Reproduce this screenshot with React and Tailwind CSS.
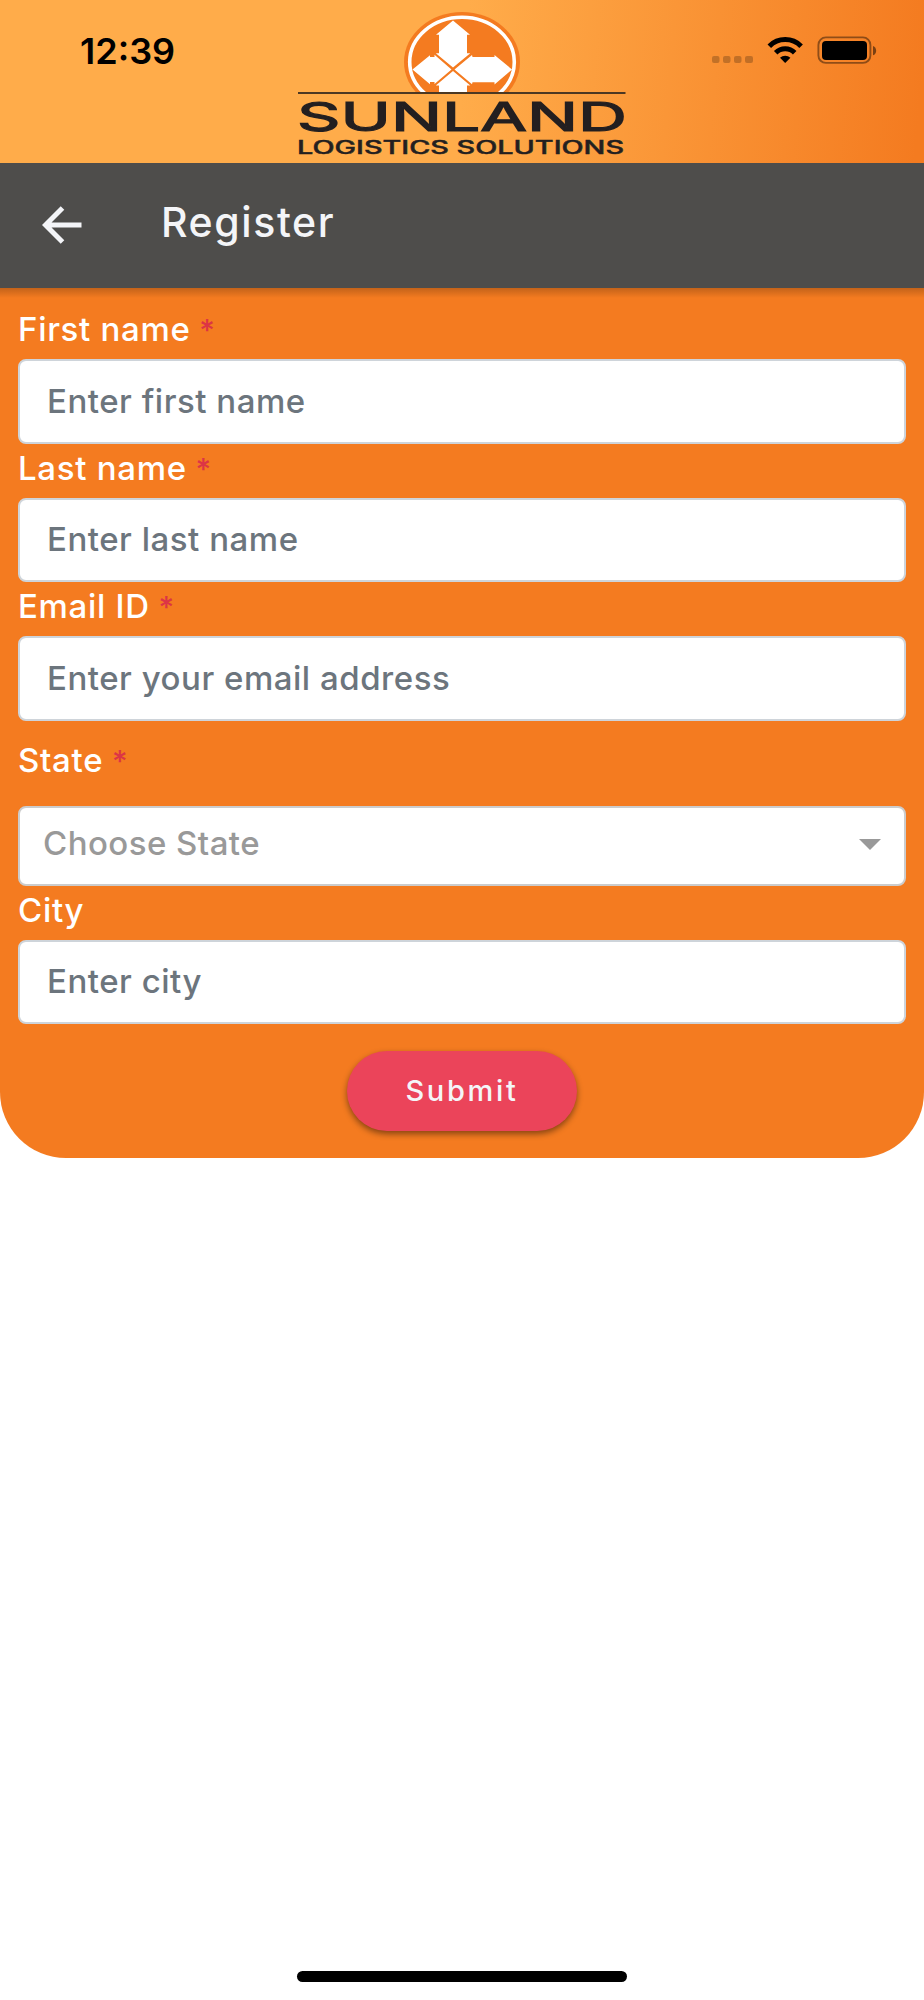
import { useState } from "react";

const fields = [
  { id: "firstName", label: "First name", placeholder: "Enter first name", required: true },
  { id: "lastName", label: "Last name", placeholder: "Enter last name", required: true },
  { id: "email", label: "Email ID", placeholder: "Enter your email address", required: true },
];

function Logo() {
  return (
    <svg width="330" height="151" viewBox="297 11 330 151" className="mx-auto mt-[11px] block">
      <clipPath id="sun">
        <rect x="297" y="11" width="330" height="81.5" />
      </clipPath>
      <g clipPath="url(#sun)">
        <ellipse cx="462" cy="62" rx="58" ry="50" fill="#f47b20" />
        <ellipse cx="462" cy="62" rx="52.3" ry="44.7" fill="none" stroke="#fff" strokeWidth="3.6" />
        <path
          fill="#fff"
          d="M453 20.5l17 14.3h-3v18.400h3.300L453 67.500 435.800 53.200h3.200V34.800h-3zM412.500 69.500L430 55.300v1.700h4.500v-2.200L451.500 69.500 434.500 84v-2H430v2.200zM454.500 69.500L472 55l.5 2h22v-2l17.500 14.500L494.500 84.500V82.200h-22L472 84.300zM453 71l17.300 14.500H467V93h-28v-7.500h-3.200z"
        />
      </g>
      <path d="M298 93h327.500" stroke="#4c3823" strokeWidth="2" />
      <text
        x="297"
        y="130.500"
        textLength="330"
        lengthAdjust="spacingAndGlyphs"
        className="font-['Inter',sans-serif] text-[40px] font-normal"
        fill="#231f20"
        stroke="#231f20"
        strokeWidth="1.2"
      >
        SUNLAND
      </text>
      <text
        x="297"
        y="153.500"
        textLength="327"
        lengthAdjust="spacingAndGlyphs"
        className="font-['Inter',sans-serif] text-[18px] font-medium"
        fill="#231f20"
        stroke="#231f20"
        strokeWidth="0.4"
      >
        LOGISTICS SOLUTIONS
      </text>
    </svg>
  );
}

function StatusIcons() {
  return (
    <svg width="166" height="30" viewBox="711 36 166 30">
      <g fill="#000" fillOpacity="0.22">
        <rect x="712" y="56" width="7.500" height="7" rx="2" />
        <rect x="723" y="56" width="7.500" height="7" rx="2" />
        <rect x="734" y="56" width="7.500" height="7" rx="2" />
        <rect x="745" y="56" width="8" height="7" rx="2" />
      </g>
      <g fill="none" stroke="#000" strokeWidth="5">
        <path d="M769.300 46.200a22.500 22.500 0 0 1 31.800 0" />
        <path d="M775.700 52.800a13.400 13.400 0 0 1 19 0" />
      </g>
      <path d="M785.200 63l-5.200-5.200a7.400 7.400 0 0 1 10.400 0z" />
      <rect x="818.400" y="37.400" width="52" height="25.500" rx="7.500" fill="none" stroke="#000" strokeOpacity="0.42" strokeWidth="1.900" />
      <rect x="822" y="41" width="45" height="19" rx="4" />
      <path d="M873 46c4.200 1.500 4.200 7.800 0 9.300z" fillOpacity="0.5" />
    </svg>
  );
}

function Required() {
  return <span className="text-[30px] leading-none text-[#dc3545]"> *</span>;
}

function Field({ field, value, onChange }) {
  return (
    <div>
      <label htmlFor={field.id} className="mb-2 block h-[46px] leading-[49px] text-white">
        {field.label}
        {field.required && <Required />}
      </label>
      <input
        id={field.id}
        value={value}
        onChange={onChange}
        placeholder={field.placeholder}
        className="block h-[84.500px] w-full rounded-[8px] border-2 border-[#ced4da] bg-white px-[27px] pb-[2px] tracking-[0.520px] outline-none placeholder:text-[#6c757d]"
      />
    </div>
  );
}

function App() {
  const [form, setForm] = useState({ firstName: "", lastName: "", email: "", city: "" });

  const handleChange = (e) => {
    setForm({ ...form, [e.target.id]: e.target.value });
  };

  return (
    <div className="flex h-[2000px] w-[924px] flex-col overflow-hidden bg-white font-['Inter',sans-serif] text-[33px] font-medium">
      <header className="relative h-[163px] shrink-0 bg-[linear-gradient(95deg,#ffac4a_0%,#ffac4a_50%,#f47b20_99%)]">
        <div className="absolute left-[80px] top-[29px] text-[36px] leading-[44px] font-semibold">
          12:39
        </div>
        <Logo />
        <div className="absolute left-[711px] top-[36px]">
          <StatusIcons />
        </div>
      </header>

      <nav className="flex h-[125px] shrink-0 items-center bg-[#4e4d4b] text-[#f4f5f8]">
        <svg width="40" height="38" viewBox="0 0 40 38" className="ml-[42px] mb-px" fill="none" stroke="currentColor" strokeWidth="5">
          <path d="M39.500 19H4.500M20.500 2L3.500 19l17 17" />
        </svg>
        <h1 className="ml-[79px] pb-[7px] text-[41px] leading-[50px] font-medium tracking-[1.600px]">Register</h1>
      </nav>

      <form
        onSubmit={(e) => e.preventDefault()}
        className="flex h-[870px] shrink-0 flex-col rounded-b-[66px] bg-[#f47b20] bg-[linear-gradient(rgba(0,0,0,0.2),transparent_10px)] px-[18px] pt-[17.300px] tracking-[0.700px]"
      >
        {fields.map((field) => (
          <Field key={field.id} field={field} value={form[field.id]} onChange={handleChange} />
        ))}

        <div className="mt-[15px]">
          <div className="h-[46px] leading-[49px] text-white">
            State
            <Required />
          </div>
          <div className="mt-6 flex h-[80px] items-center justify-between rounded-[8px] border-2 border-[#ccc] bg-white pr-[23px] pl-[23px]">
            <span className="pb-[4px] tracking-[0.450px] text-[#999]">Choose State</span>
            <svg width="22" height="11" viewBox="0 0 22 11" className="mb-[3px]">
              <path d="M0 0h22L11 11z" fill="#999" />
            </svg>
          </div>
        </div>

        <Field
          field={{ id: "city", label: "City", placeholder: "Enter city" }}
          value={form.city}
          onChange={handleChange}
        />

        <button className="mx-auto mt-[27px] h-[80px] w-[230px] rounded-full bg-[#eb445a] pb-[2px] text-[29px] tracking-[2.700px] text-[#f4f5f8] shadow-[0_3px_6px_rgba(0,0,0,0.45)]">
          Submit
        </button>
      </form>

      <div className="mx-auto mt-auto mb-[18px] h-[11px] w-[330px] rounded-full bg-black" />
    </div>
  );
}

export default App;
